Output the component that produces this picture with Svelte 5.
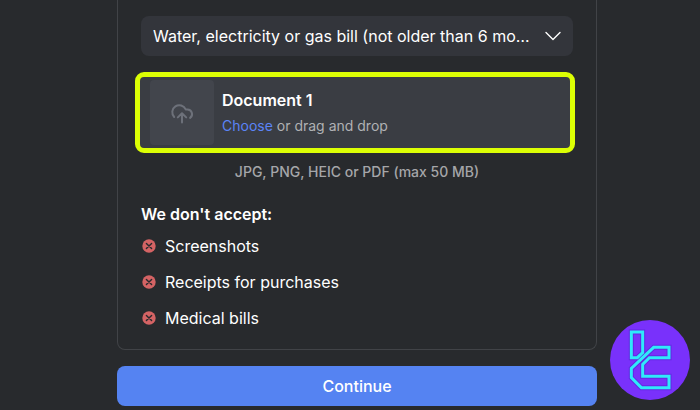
<script>
    const documentTypes = [
        'Water, electricity or gas bill (not older than 6 months)',
        'Bank statement (not older than 6 months)',
        'Tax bill (not older than 6 months)'
    ];

    const rejected = ['Screenshots', 'Receipts for purchases', 'Medical bills'];

    let documentType = documentTypes[0];
</script>

<main>
    <form on:submit|preventDefault>
        <section class="card">
            <div class="selectBox">
                <select aria-label="Document type" bind:value={documentType}>
                    {#each documentTypes as type}
                        <option value={type}>{type}</option>
                    {/each}
                </select>
                <svg class="chevron" viewBox="0 0 16 16" aria-hidden="true">
                    <path d="M1 4.5l7 7 7-7" />
                </svg>
            </div>

            <label class="upload" for="documentFile">
                <input type="file" id="documentFile" accept=".jpg,.png,.heic,.pdf">
                <span class="preview">
                    <svg viewBox="0 0 24 24" aria-hidden="true">
                        <path d="M12 21.5v-9M7.8 16.4l4.2-4.2 4.2 4.2" />
                        <path d="M4.2 16A7 7 0 1 1 15.7 8.4h1.8a4.7 4.7 0 0 1 2.6 8.5" />
                    </svg>
                </span>
                <span class="uploadText">
                    <strong>Document 1</strong>
                    <span class="hint"><span class="choose">Choose</span> or drag and drop</span>
                </span>
            </label>

            <p class="formats">JPG, PNG, HEIC or PDF (max 50 MB)</p>

            <h2>We don't accept:</h2>
            <ul>
                {#each rejected as item}
                    <li>
                        <svg viewBox="0 0 16 16" aria-hidden="true">
                            <circle cx="8" cy="8" r="6.7" />
                            <path d="M5.4 5.4l5.2 5.2M10.6 5.4l-5.2 5.2" />
                        </svg>
                        {item}
                    </li>
                {/each}
            </ul>
        </section>

        <button type="submit">Continue</button>
    </form>

    <svg class="logo" viewBox="30 30 240 240" role="img" aria-label="Logo">
        <circle cx="150" cy="150" r="120" />
        <path class="shade" d="M94 66H128V128L112 143H94ZM161 112H207V143H148L128 163V199H207V233H124L94 203V175Z" />
        <path d="M94 66H128V128L112 143H94Z" />
        <path d="M161 112H207V143H148L128 163V199H207V233H124L94 203V175Z" />
    </svg>
</main>

<style>
    :global(body) {
        background-color: #282a2d;
    }

    main {
        padding: 0 0 4px 14px;
        font-family: Inter, "Liberation Sans", sans-serif;
        font-size: 16px;
        line-height: 24px;
        color: #ffffff;
    }

    form {
        max-width: 480px;
        margin: 0 auto;
    }

    .card {
        padding: 16px 23px 19px;
        border: 1px solid #414347;
        border-top: none;
        border-radius: 0 0 8px 8px;
    }

    .selectBox {
        display: grid;
        align-items: center;
    }

    .selectBox select,
    .chevron {
        grid-area: 1 / 1;
    }

    select {
        appearance: none;
        width: 100%;
        height: 40px;
        padding: 0 40px 0 12px;
        border: none;
        border-radius: 8px;
        background-color: #33353b;
        color: inherit;
        font: inherit;
        text-overflow: ellipsis;
    }

    .chevron {
        justify-self: end;
        width: 16px;
        height: 16px;
        margin-right: 12px;
        fill: none;
        stroke: #ffffff;
        stroke-width: 1.4;
        stroke-linecap: round;
        stroke-linejoin: round;
        pointer-events: none;
    }

    .upload {
        display: flex;
        align-items: center;
        gap: 8px;
        margin: 16px -2px 0 -6px;
        padding: 3px 10px;
        border: 5px solid #dcff04;
        border-radius: 9px;
        background-color: #3a3d43;
        cursor: pointer;
    }

    .upload input {
        position: absolute;
        width: 1px;
        height: 1px;
        opacity: 0;
    }

    .preview {
        display: flex;
        align-items: center;
        justify-content: center;
        width: 64px;
        height: 65px;
        border-radius: 4px;
        background-color: #42454c;
    }

    .preview svg {
        width: 24px;
        height: 24px;
        fill: none;
        stroke: #6d717a;
        stroke-width: 2;
        stroke-linecap: round;
        stroke-linejoin: round;
    }

    .uploadText {
        display: flex;
        flex-direction: column;
        gap: 2px;
    }

    .uploadText strong {
        font-weight: 600;
    }

    .hint {
        font-size: 14px;
        color: #b0b1b4;
    }

    .choose {
        color: #5b84f7;
    }

    .formats {
        margin: 7px 0 0;
        font-size: 14px;
        font-weight: 500;
        text-align: center;
        color: #a5a6a9;
    }

    h2 {
        margin: 18px 0 8px;
        font-size: 16px;
        font-weight: 600;
    }

    ul {
        display: flex;
        flex-direction: column;
        gap: 12px;
        margin: 0;
        padding: 0;
        list-style: none;
    }

    li {
        display: flex;
        align-items: center;
        gap: 8px;
    }

    li svg {
        width: 16px;
        height: 16px;
        fill: #d46364;
    }

    li path {
        stroke: #28292d;
        stroke-width: 1.4;
        stroke-linecap: round;
    }

    button {
        width: 100%;
        height: 40px;
        margin-top: 16px;
        border: none;
        border-radius: 8px;
        background-color: #5583f2;
        color: #ffffff;
        font: inherit;
        font-weight: 500;
        cursor: pointer;
    }

    .logo {
        position: fixed;
        right: 10px;
        bottom: 10px;
        width: 80px;
        height: 80px;
        fill: #7931fb;
    }

    .logo path {
        fill: none;
        stroke: #2fe9fb;
        stroke-width: 9;
    }

    .logo .shade {
        stroke: #6328e0;
        stroke-width: 15;
    }
</style>
